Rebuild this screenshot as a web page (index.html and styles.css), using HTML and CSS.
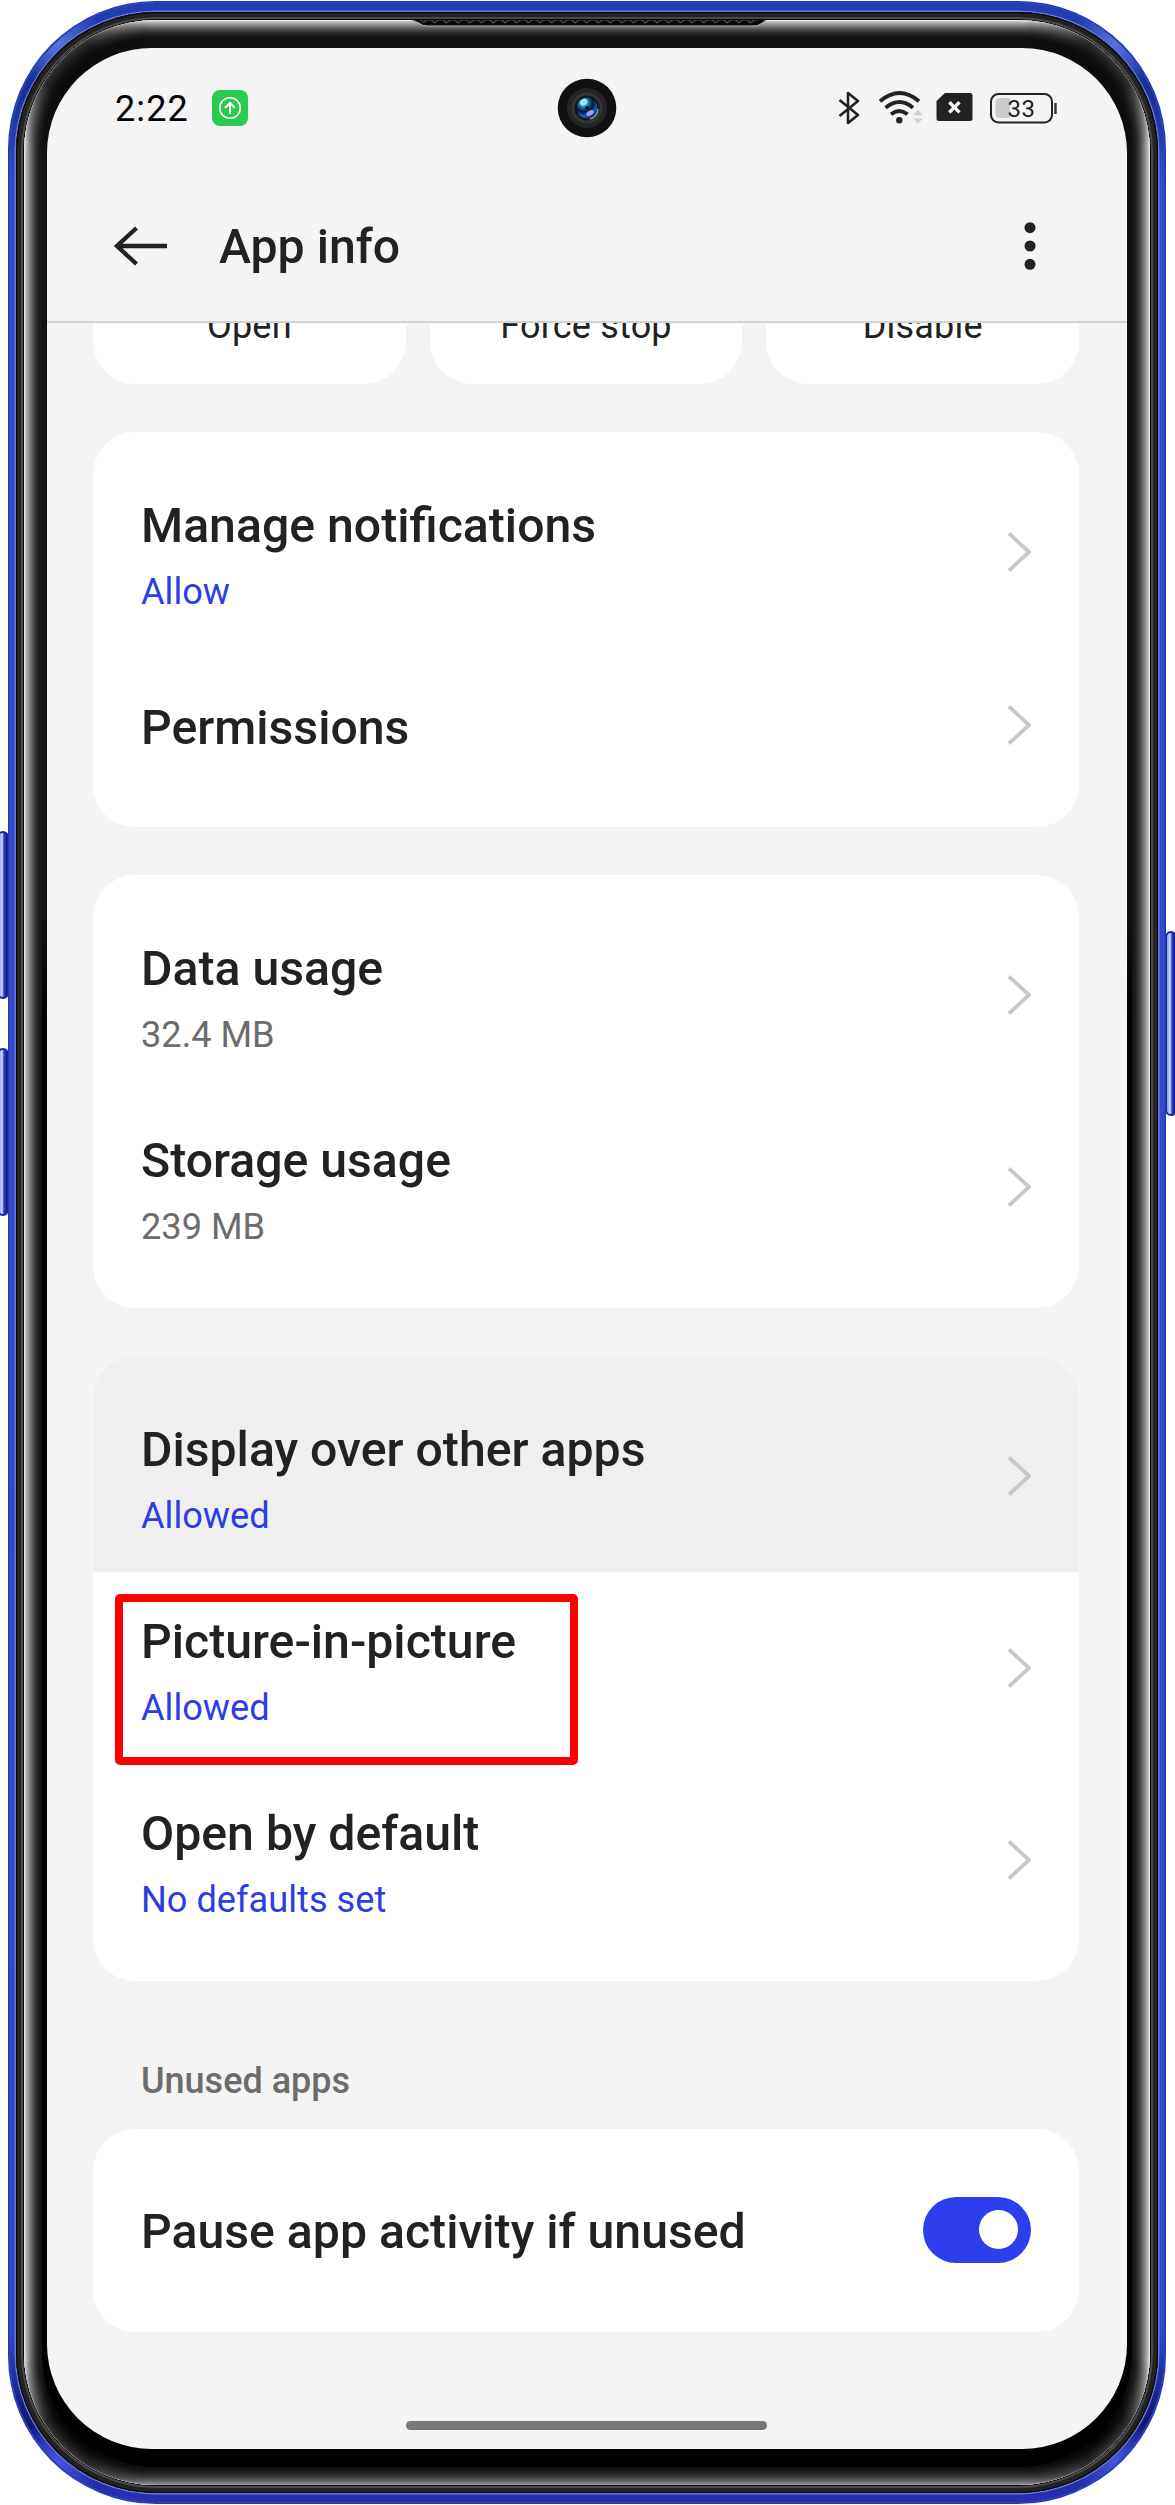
FILE: index.html
```html
<!DOCTYPE html>
<html lang="en">
<head>
<meta charset="utf-8">
<title>App info</title>
<link rel="stylesheet" href="styles.css">
</head>
<body>
<svg class="hidden" width="0" height="0"><defs><symbol id="chevron" viewBox="0 0 26 42"><path d="M3 2.500 23 21 3 39.500" fill="none" stroke="#c8c8c8" stroke-width="3.800" stroke-linejoin="round"/></symbol></defs></svg>
<div class="phone">
  <span class="key key-up"></span><span class="key key-down"></span><span class="key key-power"></span>
  <div class="frame"><div class="ring"><div class="glass">
    <svg class="speaker" viewBox="0 0 356 9" width="356" height="9"><defs><pattern id="mesh" width="11.7" height="9" patternUnits="userSpaceOnUse"><path d="M0 3 4 0h5l3 3" fill="none" stroke="#505050" stroke-width="1.2"/></pattern></defs><path d="M0 0h356l-8 5q-2 1-6 1H16q-5 0-8-3z" fill="#080808" stroke="#b8b8b8" stroke-width="1"/><path d="M0-1h356l-10 5H14z" fill="#080808"/><path d="M8 0h340l-6 4H14z" fill="url(#mesh)"/></svg>
    <main class="screen">
      <header class="status">
        <span class="clock">2:22</span>
        <svg class="share" width="36" height="36" viewBox="0 0 36 36"><rect width="36" height="36" rx="8" fill="#2dca50"/><g fill="none" stroke="#fff" stroke-width="1.6"><circle cx="18" cy="18" r="10.3"/><path d="M18 24V13.2M13.2 17.700 18 13l4.800 4.700" stroke-width="2"/></g></svg>
        <svg class="camera" width="60" height="60" viewBox="0 0 60 60"><defs><radialGradient id="lens" cx=".35" cy=".25" r=".8"><stop offset="0" stop-color="#7fe0f0"/><stop offset=".3" stop-color="#1574a5"/><stop offset=".55" stop-color="#07152f"/><stop offset=".8" stop-color="#1760d8"/><stop offset="1" stop-color="#092355"/></radialGradient></defs><circle cx="30" cy="30" r="29.300" fill="#111"/><circle cx="30" cy="30" r="20" fill="#242424"/><circle cx="30" cy="30" r="15.500" fill="#353433"/><circle cx="30" cy="30" r="12.500" fill="#141414"/><path d="M41 31a11.500 11.500 0 0 1-8 10" fill="none" stroke="#a0a0a0" stroke-width="1.500"/><circle cx="30" cy="30" r="10.500" fill="url(#lens)"/><ellipse cx="33" cy="35" rx="4" ry="2.300" fill="#a79cf0" transform="rotate(-30 33 35)"/><ellipse cx="26.500" cy="24.500" rx="4" ry="3" fill="#8ceaf4" transform="rotate(-30 26 24)"/><circle cx="30" cy="30" r="2" fill="#061025"/></svg>
        <svg class="indicators" width="220" height="36" viewBox="0 0 220 36">
          <path d="M1.500 10 20 25 10 33V3l10 8L1.500 26" fill="none" stroke="#222" stroke-width="2.600" stroke-linejoin="round"/>
          <g fill="none" stroke="#222" stroke-width="3.800"><path d="M42 11.200q19.500-16.400 39 0"/><path d="M47.500 17.700q14-11.500 27.500 0"/><path d="M53 24.200q8.300-6.300 16.500 0"/></g>
          <circle cx="61.300" cy="30.300" r="3.200" fill="#222"/><path d="M75 25.300l5-5.500 5 5.500zM75 28.500h10l-5 5z" fill="#d0d0d0"/>
          <path d="M107 3h25q2.500 0 2.500 2.500v23q0 2.500-2.500 2.500h-31q-2.500 0-2.500-2.500V11z" fill="#222"/><path d="M111.300 12.200l10.200 10.200m0-10.200-10.200 10.200" stroke="#f4f4f4" stroke-width="3.400"/>
          <path d="M172 8v20h-10q-4.500 0-4.500-4.500v-11q0-4.500 4.500-4.500z" fill="#ccc"/><rect x="153" y="4" width="61" height="28.500" rx="7.500" fill="none" stroke="#222" stroke-width="2"/><path d="M217.500 13v11" stroke="#333" stroke-width="2.400"/>
          <text class="level" x="183.500" y="26.500" text-anchor="middle">33</text>
        </svg>
      </header>
      <nav class="appbar">
        <svg width="54" height="40" viewBox="0 0 54 40"><path d="M53 20H4M22.500 2 3 20l19.500 18" fill="none" stroke="#222" stroke-width="4.300"/></svg>
        <h1>App info</h1>
        <svg width="12" height="48" viewBox="0 0 12 48" fill="#222"><circle cx="6" cy="5.700" r="5.500"/><circle cx="6" cy="24" r="5.500"/><circle cx="6" cy="42.300" r="5.500"/></svg>
      </nav>
      <div class="list">
        <div class="actions"><button>Open</button><button>Force stop</button><button>Disable</button></div>
        <section class="card">
          <div class="row"><div class="label"><h2>Manage notifications</h2><p class="link">Allow</p></div><svg class="chev"><use href="#chevron"/></svg></div>
          <div class="row short"><h2>Permissions</h2><svg class="chev"><use href="#chevron"/></svg></div>
        </section>
        <section class="card">
          <div class="row"><div class="label"><h2>Data usage</h2><p>32.4 MB</p></div><svg class="chev"><use href="#chevron"/></svg></div>
          <div class="row"><div class="label"><h2>Storage usage</h2><p>239 MB</p></div><svg class="chev"><use href="#chevron"/></svg></div>
        </section>
        <section class="card flush">
          <div class="row pressed"><div class="label"><h2>Display over other apps</h2><p class="link">Allowed</p></div><svg class="chev"><use href="#chevron"/></svg></div>
          <div class="row marked"><div class="label"><h2>Picture-in-picture</h2><p class="link">Allowed</p></div><svg class="chev"><use href="#chevron"/></svg></div>
          <div class="row"><div class="label"><h2>Open by default</h2><p class="link">No defaults set</p></div><svg class="chev"><use href="#chevron"/></svg></div>
        </section>
        <h3>Unused apps</h3>
        <section class="card last">
          <div class="row short"><h2>Pause app activity if unused</h2><span class="toggle"></span></div>
        </section>
      </div>
      <div class="homebar"></div>
    </main>
  </div></div></div>
</div>
</body>
</html>
```
FILE: styles.css
```css
*, *::before, *::after { box-sizing: border-box; }
body { margin: 0; background: #fff; font-family: Roboto, "Liberation Sans", sans-serif; color: #222; }
h1, h2, h3, p { margin: 0; font-weight: 500; }
.hidden { position: absolute; }
.phone { position: relative; width: 1175px; height: 2505px; padding: 1px 9px 1px 8px; overflow: hidden; }
.frame {
  position: relative; height: 2503px; padding: 11px 8px; border-radius: 148px;
  background:
    radial-gradient(circle at 50px 42px, #5874dd, transparent 45px),
    radial-gradient(circle at 1108px 42px, #5874dd, transparent 45px),
    radial-gradient(circle at 50px 2461px, #4654e0, transparent 45px),
    radial-gradient(circle at 1108px 2461px, #4654e0, transparent 45px),
    linear-gradient(#2340b4, #182f90 90px, #344bc7 180px, #3347cb 2330px, #14156e 2420px, #2b31b4);
  box-shadow: inset 0 0 0 1px #2439a8, inset 0 0 0 2px #2c45c8;
}
.ring { height: 2481px; padding: 8px; border-radius: 140px; background: #1c1c1c; box-shadow: 0 0 0 1.500px #6678e8, inset 0 0 0 1px #050505, inset 0 0 0 5px #222, inset 0 0 0 7px #4a4a4a, inset 0 0 0 8px #080808; }
.glass {
  position: relative; height: 2465px; padding: 28px 15px 36px 23px; border-radius: 132px; background: linear-gradient(#111, #111 900px, #000 1000px);
  box-shadow: inset 0 0 0 1px #e8e8e8, inset 0 0 0 2px #c4c4c4, inset 0 0 0 3px #b2b2b2, inset 0 0 0 4px #a2a2a2, inset 0 0 0 5px #929292, inset 0 0 0 6px #838383, inset 0 0 0 7px #757575, inset 0 0 0 8px #676767, inset 0 0 0 9px #5a5a5a, inset 0 0 0 10px #4e4e4e, inset 0 0 0 11px #434343, inset 0 0 0 12px #393939, inset 0 0 0 14px #2b2b2b, inset 0 0 0 16px #1e1e1e, inset 0 0 0 18px #161616;
}
/* Softens the rim highlight at the corners and along the bottom edge */
.glass::before {
  content: ""; position: absolute; inset: 0; border-radius: inherit;
  background:
    radial-gradient(circle at 38px 38px, rgba(10,10,10,.8) 30px, transparent 95px),
    radial-gradient(circle at 1088px 38px, rgba(10,10,10,.8) 30px, transparent 95px),
    radial-gradient(circle at 38px 2427px, rgba(0,0,0,.75) 30px, transparent 95px),
    radial-gradient(circle at 1088px 2427px, rgba(0,0,0,.75) 30px, transparent 95px),
    linear-gradient(transparent 2435px, rgba(0,0,0,.35) 2455px);
}
.speaker { position: absolute; left: 387px; top: 0; }
.key { position: absolute; width: 12px; border: 2px solid #17279a; border-radius: 7px; background: linear-gradient(90deg, #8c9ae8, #d0d8ff 40%, #3047cf 60%, #0c1680); }
.key-up { left: -3px; top: 831px; height: 168px; }
.key-down { left: -3px; top: 1048px; height: 168px; }
.key-power { left: 1165px; top: 931px; height: 185px; }
.screen { display: flex; flex-direction: column; width: 1080px; height: 2401px; border-radius: 105px; background: #f4f4f4; overflow: hidden; position: relative; }
.status { position: relative; display: flex; align-items: center; height: 120px; padding: 0 69px 0 68px; flex: none; }
.clock { width: 97px; padding-top: 2px; font-size: 36px; letter-spacing: 1.1px; color: #000; }
.camera { position: absolute; left: 510px; top: 30px; }
.indicators { margin-left: auto; }
.level { font: 24px Roboto, sans-serif; letter-spacing: .5px; fill: #222; }
.appbar { display: flex; align-items: center; height: 155px; flex: none; padding: 3px 91px 0 67px; border-bottom: 2px solid #d2d2d2; }
.appbar h1 { margin-left: 51px; margin-right: auto; padding-top: 2px; font-size: 48.200px; line-height: 56px; }
.list { flex: 1; min-height: 0; overflow: hidden; padding: 0 48px 0 46px; }
.actions { display: flex; gap: 24px; height: 61px; align-items: flex-end; }
.actions button { flex: 1; height: 144px; padding: 0 0 36px; border: 0; border-radius: 42px; background: #fff; color: #222; font: 36px/44px Roboto, sans-serif; letter-spacing: .2px; display: flex; align-items: flex-end; justify-content: center; }
.card { margin-top: 48px; padding: 24px 0; border-radius: 42px; background: #fff; overflow: hidden; }
.row { position: relative; display: flex; align-items: center; justify-content: space-between; height: 192.400px; padding: 0 47px 0 48px; }
.row.short { height: 155px; }
.label { padding-top: 7px; }
.row h2 { font-size: 48.200px; line-height: 60px; }
.row.short h2 { padding-top: 4px; }
.row p { margin-top: 12px; font-size: 36.200px; line-height: 48px; font-weight: 400; color: #6c6c6c; }
.row p.link { color: #2b3de5; }
.chev { width: 26px; height: 42px; margin-bottom: 1px; }
.flush { padding-top: 0; }
.pressed { height: 216px; padding-top: 24px; background: #efefef; }
.marked::after { content: ""; position: absolute; left: 22px; top: 22px; width: 463px; height: 171px; border: 8px solid #f00; border-radius: 5px; }
.list h3 { margin-top: 78px; padding-left: 48px; font-size: 36px; line-height: 44px; color: #6c6c6c; }
.card.last { margin-top: 26px; }
.last .row { padding-right: 48px; }
.toggle { width: 108px; height: 66px; border-radius: 33px; background: #2d3eec; padding: 13px 13px 13px 56px; }
.toggle::before { content: ""; display: block; width: 39px; height: 39px; border-radius: 50%; background: #fff; }
.homebar { position: absolute; left: 359px; bottom: 19px; width: 361px; height: 9px; border-radius: 5px; background: #777; }
```
